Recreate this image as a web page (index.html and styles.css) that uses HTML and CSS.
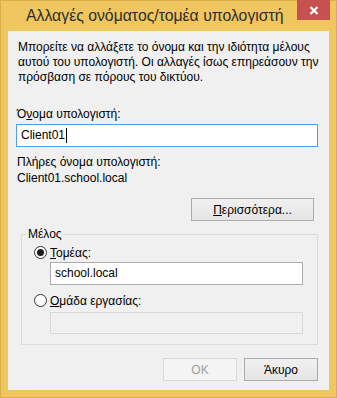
FILE: index.html
```html
<!DOCTYPE html>
<html lang="el">
<head>
<meta charset="utf-8">
<title>Αλλαγές ονόματος/τομέα υπολογιστή</title>
<link rel="stylesheet" href="styles.css">
</head>
<body>
<div class="window">
  <div class="titlebar">
    <div class="title">Αλλαγές ονόματος/τομέα υπολογιστή</div>
    <div class="close">
      <svg width="10" height="9" viewBox="0 0 10 9"><path d="M1.5 1 L8.5 8 M8.5 1 L1.5 8" stroke="#fff" stroke-width="2.2" fill="none"/></svg>
    </div>
  </div>
  <div class="client">
    <p class="desc">Μπορείτε να αλλάξετε το όνομα και την ιδιότητα μέλους<br>αυτού του υπολογιστή. Οι αλλαγές ίσως επηρεάσουν την<br>πρόσβαση σε πόρους του δικτύου.</p>
    <div class="label name-label">Ό<u>ν</u>ομα υπολογιστή:</div>
    <div class="textbox focused">Client01<span class="caret"></span></div>
    <div class="label full-label">Πλήρες όνομα υπολογιστή:</div>
    <div class="label full-value">Client01.school.local</div>
    <div class="row-right more-row">
      <div class="button more"><u>Π</u>ερισσότερα...</div>
    </div>
    <fieldset class="group">
      <legend>Μέλος</legend>
      <div class="radio-row first">
        <span class="radio checked"></span><span class="radio-label"><u>Τ</u>ομέας:</span>
      </div>
      <div class="textbox inner">school.local</div>
      <div class="radio-row second">
        <span class="radio"></span><span class="radio-label"><u>Ο</u>μάδα εργασίας:</span>
      </div>
      <div class="textbox inner disabled"></div>
    </fieldset>
    <div class="row-right buttons">
      <div class="button disabled-btn">OK</div>
      <div class="button">Άκυρο</div>
    </div>
  </div>
</div>
</body>
</html>
```
FILE: styles.css
```css
* { box-sizing: border-box; }
html, body { margin: 0; padding: 0; background: #ffffff; }
body { font-family: "Liberation Sans", Arial, sans-serif; font-size: 12px; color: #000; }

.window {
  width: 337px;
  height: 398px;
  background: #f0c65e;
  border: 1px solid #dcae47;
  display: flex;
  flex-direction: column;
}

.titlebar {
  height: 30px;
  display: flex;
  align-items: flex-start;
}
.title {
  flex: 1;
  padding-left: 25px;
  padding-top: 5px;
  font-size: 15.8px;
  line-height: 20px;
  color: #2e2e2e;
  white-space: nowrap;
}
.close {
  width: 33px;
  height: 20px;
  margin-right: 6px;
  margin-top: -1px;
  background: #c75050;
  display: flex;
  align-items: center;
  justify-content: center;
}
.close svg { display: block; }

.client {
  flex: 1;
  margin: 0 7px 7px 7px;
  background: #f0f0f0;
  padding: 9px 0 0 0;
  display: flex;
  flex-direction: column;
}

.desc {
  margin: 0 0 0 10px;
  line-height: 15px;
  white-space: nowrap;
}

.label {
  line-height: 15px;
  margin-left: 9px;
  white-space: nowrap;
}
.name-label { margin-top: 22px; }
.full-label { margin-top: 8px; }
.full-value { margin-top: 1px; }

.textbox {
  height: 23px;
  border: 1px solid #abadb3;
  background: #fff;
  line-height: 21px;
  padding-left: 4px;
  white-space: nowrap;
  display: flex;
  align-items: center;
}
.textbox.focused {
  margin: 2px 11px 0 8px;
  border-color: #569de5;
}
.caret {
  display: inline-block;
  width: 1px;
  height: 15px;
  background: #000;
  margin-left: 1px;
}

.row-right {
  display: flex;
  justify-content: flex-end;
}
.more-row {
  margin-top: 12px;
  margin-right: 15px;
}

.button {
  height: 23px;
  border: 1px solid #acacac;
  background: linear-gradient(#f0f0f0, #e5e5e5);
  display: flex;
  align-items: center;
  justify-content: center;
  white-space: nowrap;
}
.button.more { width: 123px; }

.group {
  margin: 6px 11px 0 13px;
  padding: 0 0 10px 0;
  border: 1px solid #dcdcdc;
  min-width: 0;
}
.group legend {
  margin-left: 4px;
  padding: 0 2px;
  line-height: 15px;
  color: #000;
}

.radio-row {
  display: flex;
  align-items: center;
  margin-left: 12px;
  height: 15px;
}
.radio-row.first { margin-top: 3px; }
.radio-row.second { margin-top: 8px; }
.radio {
  width: 13px;
  height: 13px;
  border: 1px solid #333;
  border-radius: 50%;
  background: #fff;
  display: flex;
  align-items: center;
  justify-content: center;
}
.radio.checked::after {
  content: "";
  width: 7px;
  height: 7px;
  border-radius: 50%;
  background: #1a1a1a;
}
.radio-label { margin-left: 3px; }

.textbox.inner {
  margin: 2px 14px 0 28px;
}
.textbox.inner.disabled {
  margin-top: 4px;
  height: 22px;
  background: #f0f0f0;
  border-color: #d9d9d9;
}

.buttons {
  margin-top: 13px;
  margin-right: 11px;
  gap: 7px;
}
.buttons .button { width: 74px; }
.button.disabled-btn {
  background: #f4f4f4;
  border-color: #d9d9d9;
  color: #a0a0a0;
}
```
